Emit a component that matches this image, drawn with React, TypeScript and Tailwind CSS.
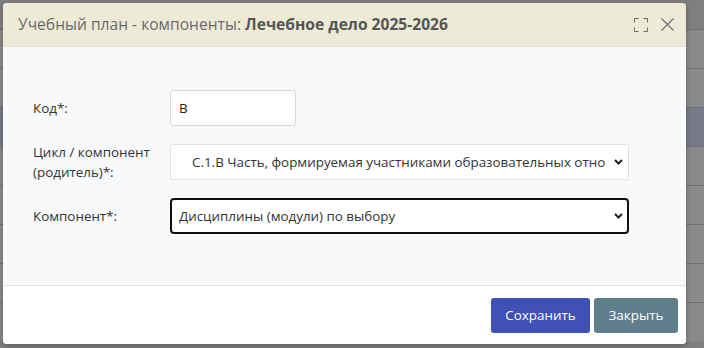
import { useState } from 'react';

const rows = [0, 1, 2, 3, 4, 5, 6, 7];

export default function App() {
    const [code, setCode] = useState('В');

    return (
        <div className="relative w-[704px] h-[348px] overflow-hidden bg-[#7f7f7f]" style={{ fontFamily: '"Open Sans", "Noto Sans", sans-serif' }}>
            {/* фон за модалкой */}
            <div className="flex flex-col pt-[29px]">
                {rows.map((r) => (
                    <div
                        key={r}
                        className={`h-[39px] border-t border-[#727272] ${r === 2 ? 'bg-[#777b89]' : 'bg-[#8a8a8a]'}`}
                    />
                ))}
            </div>

            {/* модальное окно */}
            <div className="absolute left-[3px] top-[3px] w-[683px] h-[341px] flex flex-col bg-white rounded-[4px] overflow-hidden shadow-[0_2px_6px_rgba(0,0,0,0.25)]">
                <div className="h-[44px] shrink-0 flex items-center justify-between pl-[15px] pr-[12px] bg-[#edead6] border-b border-[#e2e2e2]">
                    <h5 className="text-[15.6px] text-[#6b6b6b]">
                        Учебный план - компоненты: <span className="font-bold text-[#555]">Лечебное дело 2025-2026</span>
                    </h5>
                    <div className="flex items-center gap-[13px]">
                        <svg width="14" height="14" viewBox="0 0 14 14" fill="none" stroke="#6b6b6b" strokeWidth="1">
                            <path d="M0.5 4.5V0.5H4.5M9.5 0.5H13.5V4.5M13.5 9.5V13.5H9.5M4.5 13.5H0.5V9.5" />
                        </svg>
                        <svg width="13" height="13" viewBox="0 0 13 13" fill="none" stroke="#6b6b6b" strokeWidth="1.1">
                            <path d="M0.5 0.5L12.5 12.5M12.5 0.5L0.5 12.5" />
                        </svg>
                    </div>
                </div>

                <div className="flex-1 bg-[#f8f9fa] border-b border-[#dee2e6] pl-[30px] pr-[57px] pt-[43px] flex flex-col gap-[16px] text-[13.4px] text-[#333]">
                    <div className="flex items-center">
                        <label className="w-[137px] shrink-0">Код*:</label>
                        <input
                            value={code}
                            onChange={(e) => setCode(e.target.value)}
                            className="w-[126px] h-[36px] px-[8px] bg-white border border-[#d9d9d9] rounded-[3px] text-[13.4px] text-[#222] outline-none"
                        />
                    </div>
                    <div className="flex items-center">
                        <label className="w-[137px] shrink-0 leading-[20px]">Цикл / компонент<br />(родитель)*:</label>
                        <div className="relative flex-1">
                            <select className="w-full h-[36px] pl-[21px] pr-[22px] appearance-none bg-white border border-[#e0e0e0] rounded-[3px] text-[13.4px] text-[#333] outline-none">
                                <option>С.1.В Часть, формируемая участниками образовательных отношений</option>
                            </select>
                            <div className="absolute right-[1px] top-[1px] w-[22px] h-[34px] bg-white pointer-events-none" />
                            <svg className="absolute right-[6px] top-[15px] pointer-events-none" width="9" height="6" viewBox="0 0 9 6" fill="none" stroke="#222" strokeWidth="2">
                                <path d="M1 1L4.5 4.5L8 1" />
                            </svg>
                        </div>
                    </div>
                    <div className="flex items-center">
                        <label className="w-[137px] shrink-0">Компонент*:</label>
                        <div className="relative flex-1">
                            <select className="w-full h-[36px] pl-[7px] pr-[28px] appearance-none bg-white border-2 border-[#111] rounded-[4px] text-[13.4px] text-[#333] outline-none">
                                <option>Дисциплины (модули) по выбору</option>
                            </select>
                            <svg className="absolute right-[6px] top-[15px] pointer-events-none" width="9" height="6" viewBox="0 0 9 6" fill="none" stroke="#222" strokeWidth="2">
                                <path d="M1 1L4.5 4.5L8 1" />
                            </svg>
                        </div>
                    </div>
                </div>

                <div className="h-[58px] shrink-0 flex items-center justify-end gap-[4px] pr-[8px] bg-white">
                    <button className="h-[35px] w-[99px] bg-[#3f51b5] text-white text-[13.4px] rounded-[3px]">Сохранить</button>
                    <button className="h-[35px] w-[84px] bg-[#607d8b] text-white text-[13.4px] rounded-[3px]">Закрыть</button>
                </div>
            </div>
        </div>
    );
}
